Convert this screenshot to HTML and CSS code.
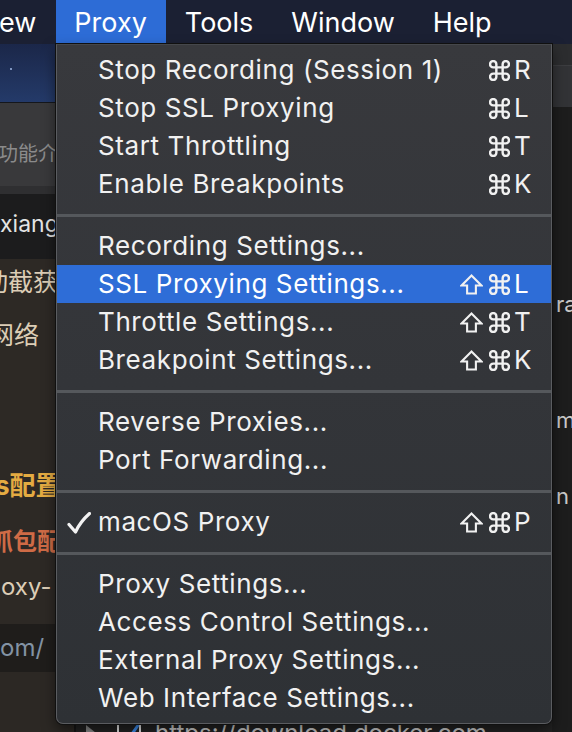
FILE: index.html
```html
<!DOCTYPE html>
<html lang="en">
<head>
<meta charset="utf-8">
<title>Proxy menu</title>
<link rel="stylesheet" href="styles.css">
</head>
<body>
<div class="menubar">
  <div class="mb-item mb-cut">ew</div>
  <div class="mb-item mb-active">Proxy</div>
  <div class="mb-item">Tools</div>
  <div class="mb-item">Window</div>
  <div class="mb-item">Help</div>
</div>

<div class="desk">
  <div class="left-pane">
    <div class="band navy"><span class="dot"></span></div>
    <div class="band gray"><div class="ln gray-text">功能介绍</div></div>
    <div class="band gray2"></div>
    <div class="band black"><div class="ln white-text">xiang</div></div>
    <div class="band brown">
      <div class="ln beige l1">动截获</div>
      <div class="ln beige l2">网络</div>
      <div class="ln yellow l3">s配置</div>
      <div class="ln orange l4">抓包配</div>
      <div class="ln beige l5">oxy-</div>
    </div>
    <div class="band codeband"><div class="ln bluegray">om/</div></div>
    <div class="band brown-rest"></div>
  </div>
  <div class="center-pane">
    <div class="spacer"></div>
    <div class="docker-row">
      <span class="tri"></span>
      <svg class="dl-icon" width="26" height="26" viewBox="0 0 26 26"><path d="M4 13 L11 21 L23 4" fill="none" stroke="#3d8ef0" stroke-width="3"/><rect x="2" y="2" width="22" height="22" rx="3" fill="none" stroke="#e8e8e8" stroke-width="2"/></svg>
      <span class="url">https://download.docker.com</span>
    </div>
  </div>
  <div class="right-pane">
    <div class="rband r1"></div>
    <div class="rband r2"></div>
    <div class="rband r3">
      <div class="rt t1">ra</div>
      <div class="rt t2">m</div>
      <div class="rt t3">n</div>
    </div>
  </div>
</div>

<div class="menu">
  <div class="row"><span class="check"></span><span class="label">Stop Recording (Session 1)</span><span class="keys"><span class="shift"></span><svg class="cmd" viewBox="2 2 20 20"><path d="M15 6v12a3 3 0 1 0 3-3H6a3 3 0 1 0 3 3V6a3 3 0 1 0-3 3h12a3 3 0 1 0-3-3"/></svg><span class="key">R</span></span></div>
  <div class="row"><span class="check"></span><span class="label">Stop SSL Proxying</span><span class="keys"><span class="shift"></span><svg class="cmd" viewBox="2 2 20 20"><path d="M15 6v12a3 3 0 1 0 3-3H6a3 3 0 1 0 3 3V6a3 3 0 1 0-3 3h12a3 3 0 1 0-3-3"/></svg><span class="key">L</span></span></div>
  <div class="row"><span class="check"></span><span class="label">Start Throttling</span><span class="keys"><span class="shift"></span><svg class="cmd" viewBox="2 2 20 20"><path d="M15 6v12a3 3 0 1 0 3-3H6a3 3 0 1 0 3 3V6a3 3 0 1 0-3 3h12a3 3 0 1 0-3-3"/></svg><span class="key">T</span></span></div>
  <div class="row"><span class="check"></span><span class="label">Enable Breakpoints</span><span class="keys"><span class="shift"></span><svg class="cmd" viewBox="2 2 20 20"><path d="M15 6v12a3 3 0 1 0 3-3H6a3 3 0 1 0 3 3V6a3 3 0 1 0-3 3h12a3 3 0 1 0-3-3"/></svg><span class="key">K</span></span></div>
  <div class="sep"></div>
  <div class="row"><span class="check"></span><span class="label">Recording Settings...</span></div>
  <div class="row selected"><span class="check"></span><span class="label">SSL Proxying Settings...</span><span class="keys"><svg class="shift" viewBox="0 0 24 22"><path d="M12 1.6 L22.4 12 H16.6 V20.4 H7.4 V12 H1.6 Z"/></svg><svg class="cmd" viewBox="2 2 20 20"><path d="M15 6v12a3 3 0 1 0 3-3H6a3 3 0 1 0 3 3V6a3 3 0 1 0-3 3h12a3 3 0 1 0-3-3"/></svg><span class="key">L</span></span></div>
  <div class="row"><span class="check"></span><span class="label">Throttle Settings...</span><span class="keys"><svg class="shift" viewBox="0 0 24 22"><path d="M12 1.6 L22.4 12 H16.6 V20.4 H7.4 V12 H1.6 Z"/></svg><svg class="cmd" viewBox="2 2 20 20"><path d="M15 6v12a3 3 0 1 0 3-3H6a3 3 0 1 0 3 3V6a3 3 0 1 0-3 3h12a3 3 0 1 0-3-3"/></svg><span class="key">T</span></span></div>
  <div class="row"><span class="check"></span><span class="label">Breakpoint Settings...</span><span class="keys"><svg class="shift" viewBox="0 0 24 22"><path d="M12 1.6 L22.4 12 H16.6 V20.4 H7.4 V12 H1.6 Z"/></svg><svg class="cmd" viewBox="2 2 20 20"><path d="M15 6v12a3 3 0 1 0 3-3H6a3 3 0 1 0 3 3V6a3 3 0 1 0-3 3h12a3 3 0 1 0-3-3"/></svg><span class="key">K</span></span></div>
  <div class="sep"></div>
  <div class="row"><span class="check"></span><span class="label">Reverse Proxies...</span></div>
  <div class="row"><span class="check"></span><span class="label">Port Forwarding...</span></div>
  <div class="sep"></div>
  <div class="row"><span class="check"><svg viewBox="0 0 24 22" width="24" height="22"><path d="M2 12.5 L8.5 20 Q13 10 22.5 1.5" fill="none" stroke="#f2f2f2" stroke-width="3.2" stroke-linecap="round" stroke-linejoin="round"/></svg></span><span class="label">macOS Proxy</span><span class="keys"><svg class="shift" viewBox="0 0 24 22"><path d="M12 1.6 L22.4 12 H16.6 V20.4 H7.4 V12 H1.6 Z"/></svg><svg class="cmd" viewBox="2 2 20 20"><path d="M15 6v12a3 3 0 1 0 3-3H6a3 3 0 1 0 3 3V6a3 3 0 1 0-3 3h12a3 3 0 1 0-3-3"/></svg><span class="key">P</span></span></div>
  <div class="sep"></div>
  <div class="row"><span class="check"></span><span class="label">Proxy Settings...</span></div>
  <div class="row"><span class="check"></span><span class="label">Access Control Settings...</span></div>
  <div class="row"><span class="check"></span><span class="label">External Proxy Settings...</span></div>
  <div class="row"><span class="check"></span><span class="label">Web Interface Settings...</span></div>
</div>
</body>
</html>
```

FILE: styles.css
```css
* { box-sizing: border-box; }
html, body {
  margin: 0;
  padding: 0;
  width: 572px;
  height: 732px;
  overflow: hidden;
  background: #1e1e1e;
  font-family: "Inter", "Noto Sans CJK SC", sans-serif;
}
body { position: relative; }

/* top menu bar */
.menubar {
  height: 44px;
  display: flex;
  background: #1b2033;
  color: #ffffff;
  font-size: 27px;
  line-height: 44px;
}
.mb-item {
  padding: 1px 19px 0 19px;
  height: 44px;
  white-space: nowrap;
}
.mb-cut { padding-left: 0; padding-right: 20px; margin-left: -1px; }
.mb-active { background: #2d6cd6; padding-left: 18px; }

/* background app */
.desk {
  display: flex;
  height: 688px;
}
.left-pane {
  width: 76px;
  flex: none;
  display: flex;
  flex-direction: column;
  overflow: hidden;
  border-right: 2px solid #161616;
}
.band { flex: none; overflow: hidden; }
.navy {
  height: 59px;
  background: linear-gradient(#1b2749, #243a69);
  border-bottom: 1px solid #15171c;
  position: relative;
}
.dot {
  position: absolute;
  left: 10px;
  top: 24px;
  width: 2px;
  height: 2px;
  background: #7f95c0;
}
.gray { height: 83px; background: #39393b; padding-top: 36px; }
.gray2 { height: 8px; background: #2f2f31; }
.black { height: 65px; background: #1c1c1d; padding-top: 10px; }
.brown { height: 365px; background: #2d2925; }
.codeband { height: 48px; background: #1f1d1b; }
.brown-rest { flex: 1; background: #2c2824; }

.ln {
  height: 40px;
  line-height: 40px;
  white-space: nowrap;
}
.gray-text { color: #8b8b8b; font-size: 20px; margin-left: -2px; height: 30px; line-height: 30px; }
.white-text { color: #e4e4e4; font-size: 23px; }
.beige { color: #dccdb6; font-size: 25px; }
.yellow { color: #e4ab42; font-size: 26px; font-weight: 700; }
.orange { color: #cf6b46; font-size: 24px; font-weight: 700; }
.bluegray { color: #8393a4; font-size: 24px; line-height: 48px; height: 48px; }
.l1 { margin-top: 3px; margin-left: -17px; }
.l2 { margin-top: 13px; margin-left: -11px; }
.l3 { margin-top: 111px; margin-left: -5px; }
.l4 { margin-top: 16px; margin-left: -11px; }
.l5 { margin-top: 5px; margin-left: 1px; font-size: 24px; }

.center-pane {
  flex: 1;
  display: flex;
  flex-direction: column;
  background: #232323;
}
.spacer { flex: 1; }
.docker-row {
  height: 40px;
  margin-bottom: -21px;
  display: flex;
  align-items: center;
  color: #cfcfcf;
  font-size: 24px;
  line-height: 40px;
}
.tri {
  width: 0;
  height: 0;
  margin-left: 10px;
  border-top: 8px solid transparent;
  border-bottom: 8px solid transparent;
  border-left: 10px solid #8a8a8a;
}
.dl-icon { margin-left: 20px; flex: none; }
.url { margin-left: 13px; white-space: nowrap; }

.right-pane {
  width: 20px;
  flex: none;
  display: flex;
  flex-direction: column;
  overflow: hidden;
}
.rband { flex: none; }
.r1 { height: 22px; background: #2c2d2f; border-bottom: 1px solid #3c3d40; }
.r2 { height: 41px; background: #323336; }
.r3 { flex: 1; background: #1d1d1d; }
.rt {
  color: #c9c9c9;
  font-size: 22px;
  height: 30px;
  line-height: 30px;
  padding-left: 4px;
  white-space: nowrap;
}
.t1 { margin-top: 182px; }
.t2 { margin-top: 86px; }
.t3 { margin-top: 46px; }

/* dropdown menu */
.menu {
  position: absolute;
  left: 56px;
  top: 44px;
  width: 496px;
  height: 680px;
  padding: 6px 0;
  background: linear-gradient(#38393d, #2e3135);
  border: 1px solid #5a5c60;
  border-top-color: #45474b;
  border-radius: 0 0 7px 7px;
  box-shadow: 0 0 0 1px #101010, 0 6px 14px rgba(0,0,0,0.5);
  color: #f1f1f1;
  font-size: 26px;
}
.row {
  height: 38px;
  display: flex;
  align-items: center;
  padding-right: 17px;
  white-space: nowrap;
}
.row.selected { background: #2e6dd7; color: #ffffff; }
.check {
  width: 42px;
  flex: none;
  display: flex;
  align-items: center;
  padding-left: 10px;
  padding-top: 1px;
}
.label { flex: 1; line-height: 38px; letter-spacing: 0.6px; margin-left: -1px; }
.keys {
  width: 74px;
  flex: none;
  display: flex;
  align-items: center;
}
.shift {
  width: 23px;
  height: 21px;
  flex: none;
  fill: none;
  stroke: #f1f1f1;
  stroke-width: 2.2;
  stroke-linejoin: miter;
}
.cmd {
  width: 21px;
  height: 21px;
  margin-left: 6px;
  flex: none;
  fill: none;
  stroke: #f1f1f1;
  stroke-width: 2.3;
}
.key { margin-left: 4px; line-height: 38px; }
.sep {
  height: 24px;
  padding-top: 11px;
}
.sep::before {
  content: "";
  display: block;
  height: 3px;
  background: #55585c;
}
```
